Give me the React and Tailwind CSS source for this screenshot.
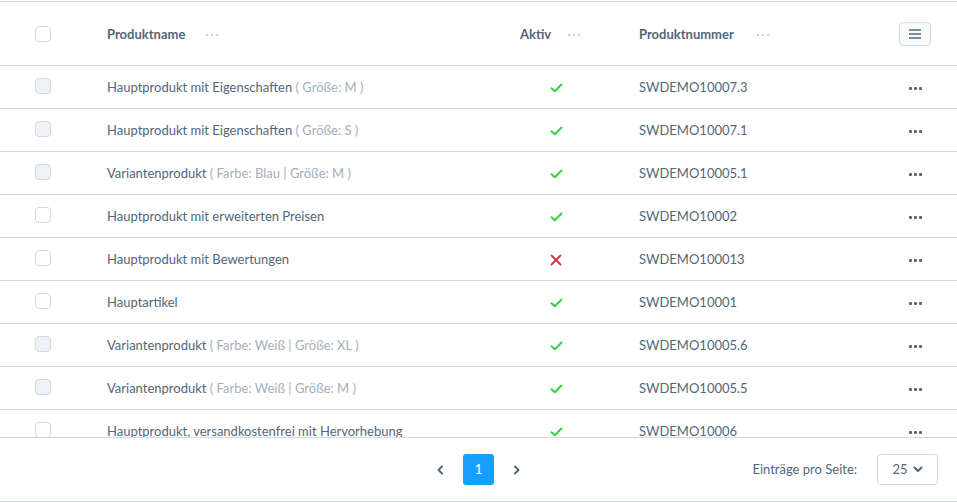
import React from "react";

const rows = [
  { name: "Hauptprodukt mit Eigenschaften", variant: "( Größe: M )", active: true, nr: "SWDEMO10007.3", gray: true },
  { name: "Hauptprodukt mit Eigenschaften", variant: "( Größe: S )", active: true, nr: "SWDEMO10007.1", gray: true },
  { name: "Variantenprodukt", variant: "( Farbe: Blau | Größe: M )", active: true, nr: "SWDEMO10005.1", gray: true },
  { name: "Hauptprodukt mit erweiterten Preisen", active: true, nr: "SWDEMO10002", gray: false },
  { name: "Hauptprodukt mit Bewertungen", active: false, nr: "SWDEMO100013", gray: false },
  { name: "Hauptartikel", active: true, nr: "SWDEMO10001", gray: false },
  { name: "Variantenprodukt", variant: "( Farbe: Weiß | Größe: XL )", active: true, nr: "SWDEMO10005.6", gray: true },
  { name: "Variantenprodukt", variant: "( Farbe: Weiß | Größe: M )", active: true, nr: "SWDEMO10005.5", gray: true },
  { name: "Hauptprodukt, versandkostenfrei mit Hervorhebung", active: true, nr: "SWDEMO10006", gray: false },
];

function Dots({ light }) {
  return (
    <span className={light ? "flex items-center gap-[3px]" : "flex items-center gap-[2px]"}>
      {[0, 1, 2].map((i) => (
        <span
          key={i}
          className={
            light
              ? "block w-[2px] h-[2px] rounded-full bg-[#b3c0cc]"
              : "block w-[3px] h-[3px] rounded-[1px] bg-[#52667a]"
          }
        />
      ))}
    </span>
  );
}

function Check() {
  return (
    <svg width="13" height="10" viewBox="0 0 13 10" fill="none">
      <path d="M1.5 5.2 L4.8 8.3 L11.5 1.5" stroke="#37d046" strokeWidth="2" strokeLinecap="round" strokeLinejoin="round" />
    </svg>
  );
}

function Cross() {
  return (
    <svg width="12" height="12" viewBox="0 0 12 12" fill="none">
      <path d="M1.5 1.5 L10.5 10.5 M10.5 1.5 L1.5 10.5" stroke="#de294c" strokeWidth="1.8" strokeLinecap="round" />
    </svg>
  );
}

function Checkbox({ gray }) {
  return (
    <span
      className={
        "block w-4 h-4 rounded-[4px] border border-[#d1d9e0] " +
        (gray ? "bg-[#eef1f5]" : "bg-white")
      }
    />
  );
}

export default function App() {
  return (
    <div
      className="w-[957px] h-[502px] bg-white pt-px flex flex-col text-[#52667a] overflow-hidden"
      style={{ fontFamily: "'Source Sans Pro', Lato, 'Liberation Sans', sans-serif" }}
    >
      <div className="border-t border-[#d1d9e0] h-[436px] overflow-hidden">
        {/* header */}
        <div className="flex items-center h-[64px] border-b border-[#d1d9e0] text-[13px] font-bold pt-[2px]">
          <div className="w-[107px] pl-[35px] -mt-[2px]">
            <Checkbox gray={false} />
          </div>
          <div className="w-[413px] flex items-center gap-[21px]">
            <span>Produktname</span>
            <Dots light />
          </div>
          <div className="w-[119px] flex items-center gap-[17px]">
            <span>Aktiv</span>
            <Dots light />
          </div>
          <div className="w-[260px] flex items-center gap-[23px]">
            <span>Produktnummer</span>
            <Dots light />
          </div>
          <div className="flex-1 -mt-[2px]">
            <button className="w-[32px] h-[24px] rounded-[4px] border border-[#d1d9e0] bg-[#f9fafb] flex flex-col items-center justify-center gap-[2px]">
              <span className="block w-[12px] h-[2px] bg-[#758ca3]" />
              <span className="block w-[12px] h-[2px] bg-[#758ca3]" />
              <span className="block w-[12px] h-[2px] bg-[#758ca3]" />
            </button>
          </div>
        </div>
        {/* rows */}
        {rows.map((r, i) => (
          <div key={i} className="flex items-center h-[43px] border-b border-[#d1d9e0] text-[13px] pt-[2px]">
            <div className="w-[107px] pl-[35px] -mt-[4px]">
              <Checkbox gray={r.gray} />
            </div>
            <div className="w-[413px] whitespace-nowrap">
              {r.name}
              {r.variant && <span className="text-[#a2b0bd]"> {r.variant}</span>}
            </div>
            <div className="w-[119px] pl-[30px] flex items-center">
              {r.active ? <Check /> : <Cross />}
            </div>
            <div className="w-[270px]">{r.nr}</div>
            <div className="flex-1 flex items-center">
              <Dots />
            </div>
          </div>
        ))}
      </div>
      <div className="border-t border-b border-[#d1d9e0] h-[65px] grid grid-cols-[1fr_auto_1fr] items-center">
        <div />
        <div className="flex items-center">
          <svg width="8" height="10" viewBox="0 0 8 10" fill="none" className="mr-[19px]">
            <path d="M6 1.5 L2.5 5 L6 8.5" stroke="#52667a" strokeWidth="2" strokeLinecap="round" strokeLinejoin="round" />
          </svg>
          <span className="w-[31px] h-[31px] rounded-[3px] bg-[#189eff] text-white text-[13px] flex items-center justify-center">
            1
          </span>
          <svg width="8" height="10" viewBox="0 0 8 10" fill="none" className="ml-[19px]">
            <path d="M2 1.5 L5.5 5 L2 8.5" stroke="#52667a" strokeWidth="2" strokeLinecap="round" strokeLinejoin="round" />
          </svg>
        </div>
        <div className="flex items-center justify-end pr-[19px] text-[13px]">
          <span className="mr-[20px]">Einträge pro Seite:</span>
          <span className="w-[61px] h-[31px] rounded-[4px] border border-[#d1d9e0] flex items-center justify-center gap-[5px]">
            <span>25</span>
            <svg width="10" height="7" viewBox="0 0 10 7" fill="none">
              <path d="M1.5 1.5 L5 5 L8.5 1.5" stroke="#52667a" strokeWidth="2" strokeLinecap="round" strokeLinejoin="round" />
            </svg>
          </span>
        </div>
      </div>
    </div>
  );
}
